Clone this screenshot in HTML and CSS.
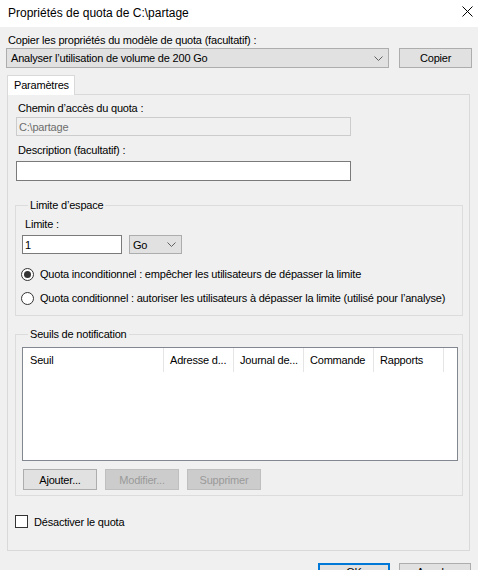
FILE: index.html
```html
<!DOCTYPE html>
<html lang="fr">
<head>
<meta charset="utf-8">
<title>Propriétés de quota</title>
<link rel="stylesheet" href="styles.css">
</head>
<body>
<div class="window">
  <div class="titlebar">
    <span class="title">Propriétés de quota de C:\partage</span>
    <svg class="close" width="11" height="11" viewBox="0 0 11 11"><path d="M0.5 0.5 L10.5 10.5 M10.5 0.5 L0.5 10.5" stroke="#000" stroke-width="1" fill="none"/></svg>
  </div>
  <div class="content">
    <div class="lbl top-lbl">Copier les propriétés du modèle de quota (facultatif) :</div>
    <div class="copy-row">
      <div class="combo wide">
        <span>Analyser l’utilisation de volume de 200 Go</span>
        <svg class="chev" width="9" height="5" viewBox="0 0 9 5"><path d="M0.5 0.5 L4.5 4.5 L8.5 0.5" stroke="#606060" fill="none"/></svg>
      </div>
      <div class="btn copy-btn">Copier</div>
    </div>
    <div class="tabs">
      <div class="tab">Paramètres</div>
    </div>
    <div class="panel">
      <div class="lbl field-lbl">Chemin d’accès du quota :</div>
      <div class="textbox disabled">C:\partage</div>
      <div class="lbl field-lbl desc-lbl">Description (facultatif) :</div>
      <div class="textbox desc"></div>

      <fieldset class="group limit-group">
        <legend>Limite d’espace</legend>
        <div class="lbl limit-lbl">Limite :</div>
        <div class="limit-row">
          <div class="textbox small">1</div>
          <div class="combo unit">
            <span>Go</span>
            <svg class="chev" width="9" height="5" viewBox="0 0 9 5"><path d="M0.5 0.5 L4.5 4.5 L8.5 0.5" stroke="#606060" fill="none"/></svg>
          </div>
        </div>
        <div class="radio-row r1"><span class="radio checked"></span><span>Quota inconditionnel : empêcher les utilisateurs de dépasser la limite</span></div>
        <div class="radio-row r2"><span class="radio"></span><span>Quota conditionnel : autoriser les utilisateurs à dépasser la limite (utilisé pour l’analyse)</span></div>
      </fieldset>

      <fieldset class="group notif-group">
        <legend>Seuils de notification</legend>
        <div class="list">
          <div class="list-head">
            <div class="col c-seuil">Seuil</div>
            <div class="col">Adresse d...</div>
            <div class="col">Journal de...</div>
            <div class="col">Commande</div>
            <div class="col">Rapports</div>
          </div>
        </div>
        <div class="btn-row">
          <div class="btn small-btn">Ajouter...</div>
          <div class="btn small-btn off">Modifier...</div>
          <div class="btn small-btn off">Supprimer</div>
        </div>
      </fieldset>

      <div class="check-row"><span class="checkbox"></span><span>Désactiver le quota</span></div>
    </div>
    <div class="footer">
      <div class="btn foot-btn default">OK</div>
      <div class="btn foot-btn">Annuler</div>
    </div>
  </div>
</div>
</body>
</html>
```
FILE: styles.css
```css
html, body {
  margin: 0;
  padding: 0;
}
body {
  width: 478px;
  height: 570px;
  overflow: hidden;
  background: #f0f0f0;
  font-family: "Liberation Sans", Arial, sans-serif;
  font-size: 11px;
  letter-spacing: -0.2px;
  color: #000;
}
.window {
  width: 478px;
  height: 570px;
  display: flex;
  flex-direction: column;
}
.titlebar {
  height: 27px;
  background: #fff;
  display: flex;
  align-items: center;
  justify-content: space-between;
  padding: 0 5px 0 8px;
  flex: none;
}
.title {
  font-size: 12px;
  letter-spacing: 0;
  line-height: 16px;
  margin-top: -1px;
}
.close {
  display: block;
  margin-top: -4px;
}
.content {
  background: #f0f0f0;
  padding: 7px 6px 0 6px;
  flex: 1;
}
.lbl {
  line-height: 13px;
  height: 13px;
  white-space: nowrap;
}
.top-lbl {
  padding-left: 2px;
}
.copy-row {
  display: flex;
  gap: 10px;
  margin-top: 1px;
}
.combo {
  box-sizing: border-box;
  height: 20px;
  background: #e1e1e1;
  border: 1px solid #adadad;
  display: flex;
  align-items: center;
  justify-content: space-between;
  white-space: nowrap;
}
.combo.wide {
  width: 384px;
  padding: 0 5px 0 4px;
}
.btn {
  box-sizing: border-box;
  background: #e1e1e1;
  border: 1px solid #adadad;
  display: flex;
  align-items: center;
  justify-content: center;
  white-space: nowrap;
}
.copy-btn {
  width: 73px;
  height: 20px;
}
.tabs {
  display: flex;
  margin-top: 7px;
  padding-left: 1px;
}
.tab {
  box-sizing: border-box;
  width: 68px;
  height: 20px;
  background: #fff;
  border: 1px solid #d9d9d9;
  border-bottom: none;
  padding-left: 6px;
  line-height: 18px;
  margin-bottom: -1px;
  position: relative;
  z-index: 1;
}
.panel {
  box-sizing: border-box;
  margin-left: 1px;
  width: 463px;
  height: 457px;
  border: 1px solid #d9d9d9;
  background: #f0f0f0;
  padding: 7px 6px 0 7px;
}
.field-lbl {
  padding-left: 3px;
}
.textbox {
  box-sizing: border-box;
  background: #fff;
  border: 1px solid #7a7a7a;
  padding-left: 2px;
  display: flex;
  align-items: center;
  white-space: nowrap;
}
.textbox.disabled {
  margin: 2px 0 0 1px;
  width: 335px;
  height: 19px;
  background: #f0f0f0;
  border-color: #cccccc;
  color: #6d6d6d;
}
.desc-lbl {
  margin-top: 8px;
}
.textbox.desc {
  margin: 4px 0 0 1px;
  width: 335px;
  height: 20px;
}
.group {
  box-sizing: border-box;
  margin: 0;
  width: 448px;
  border: 1px solid #dcdcdc;
  min-width: 0;
}
.group legend {
  padding: 0 2px;
  margin-left: 6px;
  line-height: 13px;
  height: 13px;
  white-space: nowrap;
}
.limit-group {
  margin-top: 18px;
  padding: 6px 6px 9px 6px;
}
.limit-lbl {
  padding-left: 3px;
}
.limit-row {
  display: flex;
  gap: 7px;
  margin-top: 4px;
}
.textbox.small {
  width: 100px;
  height: 19px;
}
.combo.unit {
  width: 53px;
  height: 19px;
  padding: 0 5px 0 3px;
}
.radio-row {
  display: flex;
  align-items: center;
  gap: 6px;
  height: 16px;
  white-space: nowrap;
  margin-left: -1px;
}
.r1 {
  margin-top: 12px;
}
.r2 {
  margin-top: 8px;
}
.radio {
  box-sizing: border-box;
  width: 13px;
  height: 13px;
  border: 1px solid #333;
  border-radius: 50%;
  background: #fff;
  display: flex;
  align-items: center;
  justify-content: center;
  flex: none;
}
.radio.checked::after {
  content: "";
  width: 7px;
  height: 7px;
  border-radius: 50%;
  background: #333;
}
.notif-group {
  margin-top: 12px;
  padding: 6px 5px 5px 6px;
}
.list {
  box-sizing: border-box;
  width: 436px;
  height: 114px;
  background: #fff;
  border: 1px solid #828790;
}
.list-head {
  display: flex;
  height: 24px;
}
.col {
  box-sizing: border-box;
  width: 70px;
  border-right: 1px solid #e5e5e5;
  padding-left: 6px;
  line-height: 24px;
  white-space: nowrap;
  overflow: hidden;
}
.col.c-seuil {
  width: 141px;
  padding-left: 7px;
}
.btn-row {
  display: flex;
  gap: 8px;
  margin-top: 8px;
  padding-left: 1px;
}
.small-btn {
  width: 74px;
  height: 21px;
}
.small-btn.off {
  background: #cccccc;
  border-color: #bfbfbf;
  color: #9a9a9a;
}
.check-row {
  display: flex;
  align-items: center;
  gap: 6px;
  margin-top: 19px;
  height: 13px;
  white-space: nowrap;
}
.checkbox {
  box-sizing: border-box;
  width: 13px;
  height: 13px;
  border: 1px solid #333;
  background: #fff;
  flex: none;
}
.footer {
  display: flex;
  justify-content: flex-end;
  gap: 9px;
  margin-top: 12px;
  padding-right: 1px;
}
.foot-btn {
  width: 72px;
  height: 23px;
  align-items: flex-start;
  line-height: 13px;
  padding-top: 2px;
}
.foot-btn.default {
  border: 2px solid #0078d7;
  padding-top: 1px;
}
```
